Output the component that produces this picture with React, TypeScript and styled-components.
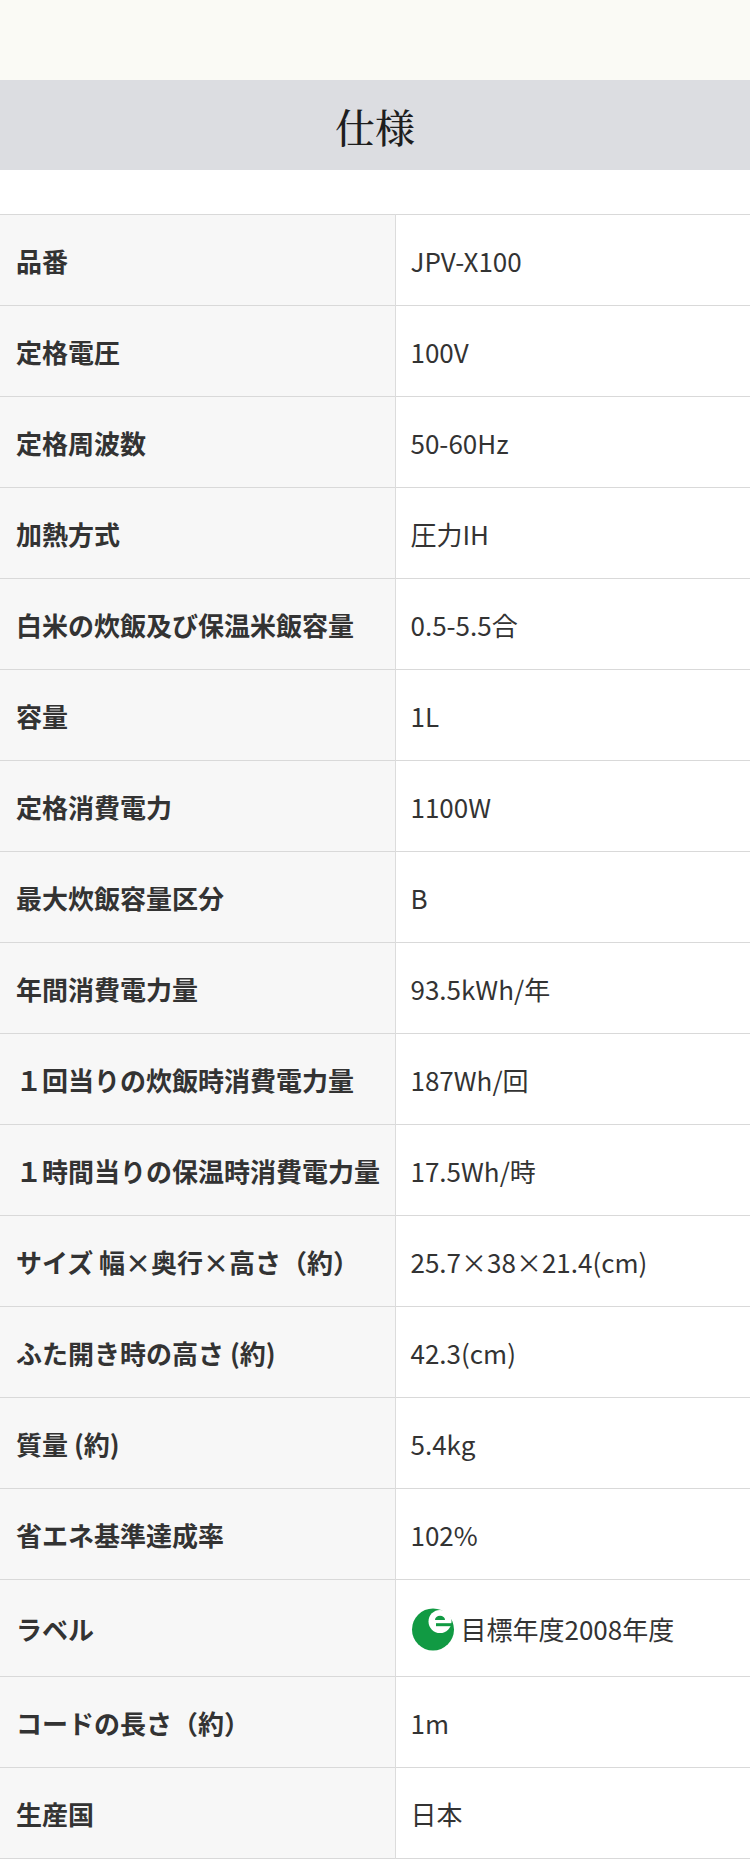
import React from "react";
import styled, { createGlobalStyle } from "styled-components";

const GlobalStyle = createGlobalStyle`
  body {
    margin: 0;
    background: #fff;
    font-family: "Noto Sans CJK JP", "Noto Sans", sans-serif;
    color: #333;
  }
`;

const Page = styled.div`
  width: 750px;
  display: flex;
  flex-direction: column;
`;

const TopBand = styled.div`
  height: 80px;
  background: #fafaf5;
`;

const Heading = styled.h2`
  margin: 0;
  height: 90px;
  display: flex;
  align-items: center;
  justify-content: center;
  background: #dcdde1;
  font-family: "Noto Serif CJK JP", "Noto Serif JP", serif;
  font-weight: 500;
  font-size: 40px;
  color: #1e1e1e;
`;

const SpecTable = styled.table`
  margin-top: 44px;
  width: 750px;
  border-collapse: collapse;
  table-layout: fixed;
`;

const Row = styled.tr`
  border-top: 1px solid #d9d9d9;
  border-bottom: 1px solid #d9d9d9;
`;

const Label = styled.th`
  width: 395px;
  box-sizing: border-box;
  padding: 27px 8px 26px 16px;
  background: #f7f7f7;
  border-right: 1px solid #dcdcdc;
  text-align: left;
  font-size: 26px;
  line-height: 37px;
  font-weight: 700;
  color: #333;
  white-space: nowrap;
`;

const Value = styled.td`
  padding: 27px 10px 26px 15px;
  font-size: 26px;
  line-height: 37px;
  font-weight: 400;
  color: #333;
`;

const MarkLine = styled.div`
  display: flex;
  align-items: center;
  gap: 6px;
  height: 43px;
`;

const EcoMark = () => (
  <svg width="44" height="44" viewBox="0 0 44 44" aria-hidden>
    <circle cx="22" cy="22.5" r="21" fill="#119a43" />
    <circle cx="29" cy="14.5" r="11.5" fill="#fff" />
    <path d="M24 13 a5 4.2 0 0 1 10 0 Z" fill="#119a43" />
    <rect x="25" y="16.2" width="17" height="3" fill="#119a43" />
  </svg>
);

const specs: [string, React.ReactNode][] = [
  ["品番", "JPV-X100"],
  ["定格電圧", "100V"],
  ["定格周波数", "50-60Hz"],
  ["加熱方式", "圧力IH"],
  ["白米の炊飯及び保温米飯容量", "0.5-5.5合"],
  ["容量", "1L"],
  ["定格消費電力", "1100W"],
  ["最大炊飯容量区分", "B"],
  ["年間消費電力量", "93.5kWh/年"],
  ["１回当りの炊飯時消費電力量", "187Wh/回"],
  ["１時間当りの保温時消費電力量", "17.5Wh/時"],
  ["サイズ 幅×奥行×高さ（約）", "25.7×38×21.4(cm)"],
  ["ふた開き時の高さ (約)", "42.3(cm)"],
  ["質量 (約)", "5.4kg"],
  ["省エネ基準達成率", "102%"],
  [
    "ラベル",
    <MarkLine>
      <EcoMark />
      目標年度2008年度
    </MarkLine>,
  ],
  ["コードの長さ（約）", "1m"],
  ["生産国", "日本"],
];

export default function App() {
  return (
    <Page>
      <GlobalStyle />
      <TopBand />
      <Heading>仕様</Heading>
      <SpecTable>
        <tbody>
          {specs.map(([label, value]) => (
            <Row key={label}>
              <Label>{label}</Label>
              <Value>{value}</Value>
            </Row>
          ))}
        </tbody>
      </SpecTable>
    </Page>
  );
}
